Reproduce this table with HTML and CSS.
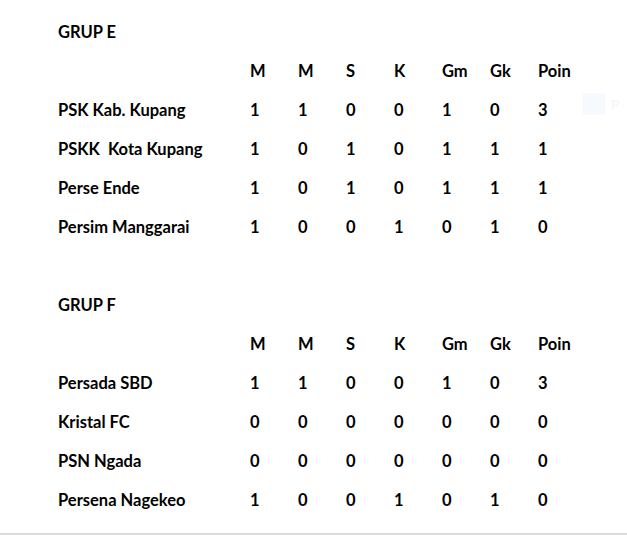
FILE: index.html
```html
<!DOCTYPE html>
<html>
<head>
<meta charset="utf-8">
<link rel="stylesheet" href="styles.css">
</head>
<body>
<div class="page">
  <section class="group">
    <div class="title">GRUP E</div>
    <div class="row head"><span></span><span>M</span><span>M</span><span>S</span><span>K</span><span>Gm</span><span>Gk</span><span>Poin</span></div>
    <div class="row"><span>PSK Kab. Kupang</span><span>1</span><span>1</span><span>0</span><span>0</span><span>1</span><span>0</span><span>3</span></div>
    <div class="row"><span>PSKK&nbsp; Kota Kupang</span><span>1</span><span>0</span><span>1</span><span>0</span><span>1</span><span>1</span><span>1</span></div>
    <div class="row"><span>Perse Ende</span><span>1</span><span>0</span><span>1</span><span>0</span><span>1</span><span>1</span><span>1</span></div>
    <div class="row"><span>Persim Manggarai</span><span>1</span><span>0</span><span>0</span><span>1</span><span>0</span><span>1</span><span>0</span></div>
  </section>
  <section class="group">
    <div class="title">GRUP F</div>
    <div class="row head"><span></span><span>M</span><span>M</span><span>S</span><span>K</span><span>Gm</span><span>Gk</span><span>Poin</span></div>
    <div class="row"><span>Persada SBD</span><span>1</span><span>1</span><span>0</span><span>0</span><span>1</span><span>0</span><span>3</span></div>
    <div class="row"><span>Kristal FC</span><span>0</span><span>0</span><span>0</span><span>0</span><span>0</span><span>0</span><span>0</span></div>
    <div class="row"><span>PSN Ngada</span><span>0</span><span>0</span><span>0</span><span>0</span><span>0</span><span>0</span><span>0</span></div>
    <div class="row"><span>Persena Nagekeo</span><span>1</span><span>0</span><span>0</span><span>1</span><span>0</span><span>1</span><span>0</span></div>
  </section>
</div>
<div class="ghost"><span class="ghost-box"></span><span class="ghost-text">P</span></div>
</body>
</html>
```
FILE: styles.css
```css
html, body {
  margin: 0;
  padding: 0;
  background: #ffffff;
}
body {
  font-family: Lato, "Liberation Sans", sans-serif;
  font-weight: 700;
  font-size: 16.5px;
  color: #000000;
  width: 627px;
  height: 535px;
  overflow: hidden;
  position: relative;
}
.page {
  padding: 13px 0 13px 58px;
  border-bottom: 2px solid #dcdcdc;
  display: flex;
  flex-direction: column;
  gap: 39px;
}
.group {
  display: flex;
  flex-direction: column;
}
.title, .row {
  height: 39px;
  line-height: 39px;
}
.row {
  display: grid;
  grid-template-columns: 192px repeat(7, 48px);
}
.ghost {
  position: absolute;
  left: 583px;
  top: 93px;
  display: flex;
  align-items: center;
  gap: 6px;
}
.ghost-box {
  width: 22px;
  height: 22px;
  background: #f6f9fe;
}
.ghost-text {
  color: #f1f4f8;
  font-size: 14px;
  font-weight: 400;
}
```
